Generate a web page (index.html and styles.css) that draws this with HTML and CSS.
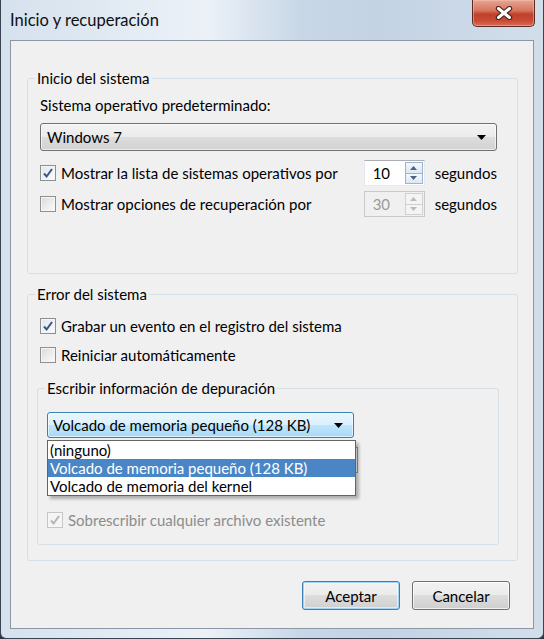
FILE: index.html
```html
<!DOCTYPE html>
<html lang="es">
<head>
<meta charset="utf-8">
<title>Inicio y recuperación</title>
<link rel="stylesheet" href="styles.css">
</head>
<body>
<div class="window">
  <div class="titlebar">
    <div class="title">Inicio y recuperación</div>
    <div class="close">
      <svg width="18" height="14" viewBox="0 0 18 14"><path d="M3.5 2.5 L14.5 11.5 M14.5 2.5 L3.5 11.5" stroke="#4a2520" stroke-width="5.4" stroke-linecap="round"/><path d="M3.5 2.5 L14.5 11.5 M14.5 2.5 L3.5 11.5" stroke="#ffffff" stroke-width="3" stroke-linecap="round"/></svg>
    </div>
  </div>
  <div class="client">
    <fieldset class="group g1">
      <legend>Inicio del sistema</legend>
      <div class="gbody g1body">
        <div class="label">Sistema operativo predeterminado:</div>
        <div class="combo">
          <span>Windows 7</span>
          <svg class="arrow" width="9" height="5" viewBox="0 0 9 5"><polygon points="0,0 9,0 4.5,5" fill="#000"/></svg>
        </div>
        <div class="row r1">
          <span class="check on"><svg width="12" height="12" viewBox="0 0 12 12"><path d="M2 6.5 L4.6 9.5 L10 2" stroke="#3d5482" stroke-width="2" fill="none"/></svg></span>
          <span class="ctext">Mostrar la lista de sistemas operativos por</span>
          <span class="spin"><span class="num">10</span><span class="btns"><span class="sb"><svg width="7" height="4" viewBox="0 0 7 4"><polygon points="0,4 7,4 3.5,0" fill="#4d6185"/></svg></span><span class="sb"><svg width="7" height="4" viewBox="0 0 7 4"><polygon points="0,0 7,0 3.5,4" fill="#4d6185"/></svg></span></span></span>
          <span class="unit">segundos</span>
        </div>
        <div class="row r2">
          <span class="check"></span>
          <span class="ctext">Mostrar opciones de recuperación por</span>
          <span class="spin off"><span class="num">30</span><span class="btns"><span class="sb"><svg width="7" height="4" viewBox="0 0 7 4"><polygon points="0,4 7,4 3.5,0" fill="#bcbcbc"/></svg></span><span class="sb"><svg width="7" height="4" viewBox="0 0 7 4"><polygon points="0,0 7,0 3.5,4" fill="#bcbcbc"/></svg></span></span></span>
          <span class="unit">segundos</span>
        </div>
      </div>
    </fieldset>

    <fieldset class="group g2">
      <legend>Error del sistema</legend>
      <div class="gbody g2body">
        <div class="row r3">
          <span class="check on"><svg width="12" height="12" viewBox="0 0 12 12"><path d="M2 6.5 L4.6 9.5 L10 2" stroke="#3d5482" stroke-width="2" fill="none"/></svg></span>
          <span class="ctext">Grabar un evento en el registro del sistema</span>
        </div>
        <div class="row r4">
          <span class="check"></span>
          <span class="ctext">Reiniciar automáticamente</span>
        </div>
        <fieldset class="group g3">
          <legend>Escribir información de depuración</legend>
          <div class="gbody g3body">
            <div class="combowrap">
              <div class="combo hot">
                <span>Volcado de memoria pequeño (128 KB)</span>
                <svg class="arrow" width="9" height="5" viewBox="0 0 9 5"><polygon points="0,0 9,0 4.5,5" fill="#000"/></svg>
              </div>
              <div class="field"></div>
              <ul class="list">
                <li>(ninguno)</li>
                <li class="sel">Volcado de memoria pequeño (128 KB)</li>
                <li>Volcado de memoria del kernel</li>
              </ul>
            </div>
            <div class="row r5 disabled">
              <span class="check dis"><svg width="12" height="12" viewBox="0 0 12 12"><path d="M2 6.5 L4.6 9.5 L10 2" stroke="#b4b4b4" stroke-width="2" fill="none"/></svg></span>
              <span class="ctext">Sobrescribir cualquier archivo existente</span>
            </div>
          </div>
        </fieldset>
      </div>
    </fieldset>

    <div class="buttons">
      <button class="btn def">Aceptar</button>
      <button class="btn">Cancelar</button>
    </div>
  </div>
</div>
</body>
</html>
```

FILE: styles.css
```css
* { box-sizing: border-box; }
html, body { margin: 0; padding: 0; }
body {
  width: 544px;
  height: 639px;
  overflow: hidden;
  font-family: "Lato", "Open Sans", sans-serif;
  font-size: 15px;
  color: #000;
  background: #2b3440;
}
.window {
  height: 639px;
  display: flex;
  flex-direction: column;
  border-left: 1px solid #3a4450;
  border-right: 1px solid #3a4450;
  border-bottom: 1px solid #3a4450;
  border-bottom-left-radius: 6px;
  border-bottom-right-radius: 6px;
  background: linear-gradient(90deg, #d5e1ed 0%, #e4ecf4 25%, #ecf1f7 38%, #c8d7e7 55%, #c3d3e4 70%, #d2deea 100%);
}
.titlebar {
  height: 40px;
  flex: none;
  display: flex;
  justify-content: space-between;
  align-items: flex-start;
  padding-left: 9px;
}
.title {
  margin-top: 10px;
  line-height: 20px;
  font-size: 16.5px;
  color: #101010;
}
.close {
  width: 63px;
  height: 27px;
  margin-right: 8px;
  border: 1px solid #5b2a22;
  border-top: none;
  border-radius: 0 0 5px 5px;
  background: linear-gradient(#e6a695 0%, #d7765f 40%, #c2402a 55%, #c84c35 80%, #d86e55 100%);
  box-shadow: inset 0 0 0 1px rgba(255,200,180,0.45);
  display: flex;
  align-items: center;
  justify-content: center;
}
.client {
  flex: 1;
  margin: 0 9px 9px 9px;
  border: 1px solid #8b97a5;
  background: #f0f0f0;
  display: flex;
  flex-direction: column;
}
.group {
  margin: 0;
  padding: 0;
  border: 1px solid #d5dfe5;
  border-radius: 3px;
  min-width: 0;
}
.group legend {
  padding: 0 2px;
  margin-left: 7px;
  line-height: 18px;
}
.g1 { margin: 28px 15px 0 16px; }
.g1body { padding: 9px 20px 56px 12px; }
.label { line-height: 18px; }
.combo {
  margin-top: 9px;
  height: 28px;
  border: 1px solid #707070;
  border-radius: 3px;
  background: linear-gradient(#f3f3f3 0%, #ebebeb 50%, #dddddd 50%, #d2d2d2 100%);
  display: flex;
  align-items: center;
  justify-content: space-between;
  padding: 0 10px 0 6px;
  box-shadow: inset 0 0 0 1px rgba(255,255,255,0.6);
}
.row {
  display: flex;
  align-items: center;
}
.r1 { margin-top: 9px; height: 26px; }
.r2 { margin-top: 5px; height: 26px; }
.check {
  width: 16px;
  height: 16px;
  flex: none;
  border: 1px solid #8e8f8f;
  background: linear-gradient(135deg, #d9d9d9 0%, #ededed 55%, #fbfbfb 100%);
  box-shadow: inset 0 0 0 1px #f6f6f6;
  display: flex;
  align-items: center;
  justify-content: center;
}
.check.on { background: linear-gradient(135deg, #dfe6ef 0%, #eef2f7 55%, #fbfcfe 100%); }
.check.dis { border-color: #c6c6c6; background: #f4f4f4; }
.ctext { margin-left: 5px; flex: 1; line-height: 18px; white-space: nowrap; }
.spin {
  width: 61px;
  height: 26px;
  flex: none;
  display: flex;
  align-items: stretch;
  background: #fff;
  border: 1px solid #e3e9ef;
  border-top-color: #abadb3;
}
.spin .num { flex: 1; padding-left: 8px; line-height: 24px; }
.spin .btns {
  width: 19px;
  display: flex;
  flex-direction: column;
  padding: 1px 1px 1px 0;
}
.spin .sb {
  flex: 1;
  border: 1px solid #9fb4cf;
  background: linear-gradient(#f4f8fc, #dce8f4);
  display: flex;
  align-items: center;
  justify-content: center;
}
.spin .sb + .sb { border-top: none; }
.spin.off { background: #f0f0f0; border-color: #c9c9c9; }
.spin.off .num { color: #9a9a9a; }
.spin.off .sb { border-color: #d0d0d0; background: #f4f4f4; }
.unit { margin-left: 10px; flex: none; line-height: 18px; }

.g2 { margin: 11px 15px 0 16px; }
.g2body { padding: 0 18px 15px 9px; }
.r3 { margin-top: 13px; height: 20px; margin-left: 3px; }
.r4 { margin-top: 9px; height: 20px; margin-left: 3px; }
.g3 { margin-top: 14px; }
.g3 legend { margin-left: 7px; }
.g3body { padding: 15px 0 14px 9px; }
.combowrap {
  position: relative;
  width: 309px;
  height: 98px;
}
.combo.hot {
  margin-top: 0;
  width: 307px;
  height: 26px;
  border-color: #3c7fb1;
  background: linear-gradient(#eaf6fd 0%, #d9f0fc 50%, #bee6fd 50%, #a9d9f6 100%);
  padding: 0 10px 0 5px;
}
.field {
  margin-top: 9px;
  width: 311px;
  height: 26px;
  border: 1px solid #9a9a9a;
  background: #fff;
}
.list {
  position: absolute;
  left: 0;
  top: 28px;
  width: 309px;
  height: 56px;
  margin: 0;
  padding: 0;
  list-style: none;
  background: #fff;
  border: 1px solid #646464;
  box-shadow: 3px 3px 3px rgba(0,0,0,0.28);
}
.list li {
  height: 18px;
  line-height: 18px;
  padding-left: 2px;
  white-space: nowrap;
}
.list li.sel { background: #4a86c6; color: #fff; }
.r5 { height: 20px; margin-top: 0; }
.r5 .ctext { color: #8c8c8c; }

.buttons {
  display: flex;
  justify-content: flex-end;
  gap: 12px;
  margin: 20px 23px 0 0;
}
.btn {
  width: 98px;
  height: 29px;
  font-family: inherit;
  font-size: 15px;
  color: #000;
  border: 1px solid #707070;
  border-radius: 3px;
  background: linear-gradient(#f2f2f2 0%, #ebebeb 50%, #dddddd 50%, #cfcfcf 100%);
  box-shadow: inset 0 0 0 1px rgba(255,255,255,0.7);
  padding: 0;
}
.btn.def {
  border-color: #3c7fb1;
  box-shadow: inset 0 0 0 1px #9fd4f3, inset 0 0 0 2px rgba(255,255,255,0.5);
}
```
